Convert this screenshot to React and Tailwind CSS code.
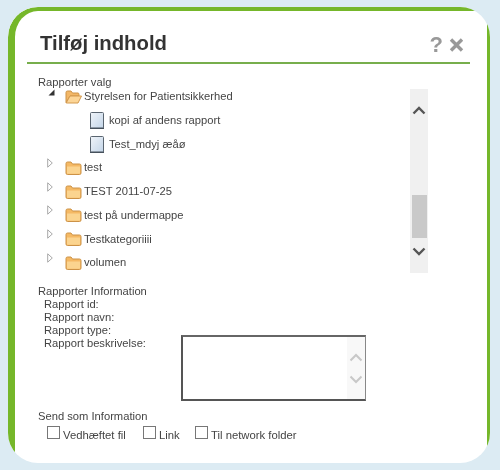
import React from "react";

const FONT = "font-['Liberation_Sans',Arial,sans-serif]";

function ClosedFolder() {
  return (
    <svg width="17" height="14" viewBox="0 0 17 14" className="shrink-0">
      <path d="M1 12V2.500Q1 1 2.500 1H6l1.500 2h7Q16 3 16 4.500V12Q16 13.500 14.500 13.500h-12Q1 13.500 1 12Z" fill="#f5b964" stroke="#cc9247" />
      <path d="M2 5.500h13V12q0 .7-.7.7H2.700Q2 12.700 2 12Z" fill="#fbd48f" />
    </svg>
  );
}

function OpenFolder() {
  return (
    <svg width="17" height="14" viewBox="0 0 17 14" className="shrink-0">
      <path d="M1 12.500V2.500Q1 1 2.500 1H6l1.500 2h5.500Q14 3 14 4.500V6H5L1 12.500Z" fill="#f3b766" stroke="#cc9247" />
      <path d="M1.200 13H13l3.500-7H5Z" fill="#fcd596" stroke="#d49a4f" />
    </svg>
  );
}

function DocIcon() {
  return (
    <svg width="14" height="17" viewBox="0 0 14 17" className="shrink-0">
      <defs>
        <linearGradient id="doc" x1="0" y1="0" x2="1" y2="1">
          <stop offset="0" stopColor="#f0f4f9" />
          <stop offset="1" stopColor="#c3d5e8" />
        </linearGradient>
      </defs>
      <rect x="0.500" y="0.500" width="13" height="16" rx="1" fill="url(#doc)" stroke="#5a6570" />
      <rect x="0" y="15.500" width="14" height="1.500" fill="#46515c" />
    </svg>
  );
}

function Arrow({ open }) {
  return open ? (
    <svg width="7" height="7" viewBox="0 0 7 7" className="shrink-0">
      <path d="M0.500 6.500L6.500 0.500V6.500Z" fill="#333" />
    </svg>
  ) : (
    <svg width="6" height="10" viewBox="0 0 6 10" className="shrink-0">
      <path d="M0.700 0.800L5.300 5L0.700 9.200Z" fill="#fff" stroke="#a8a8a8" />
    </svg>
  );
}

function Chevron({ up, color = "#555", width = 2 }) {
  return (
    <svg width="14" height="9" viewBox="0 0 14 9">
      <path d={up ? "M1.500 7.500L7 2l5.500 5.500" : "M1.500 1.500L7 7l5.500-5.500"} fill="none" stroke={color} strokeWidth={width} />
    </svg>
  );
}

function FolderRow({ label }) {
  return (
    <div className="flex h-[23.700px] items-center">
      <div className="ml-[9px] flex w-[6px] -translate-y-[5px] justify-center">
        <Arrow />
      </div>
      <div className="ml-[12px] flex items-center gap-[2px]">
        <ClosedFolder />
        <span>{label}</span>
      </div>
    </div>
  );
}

function CheckItem({ label, width }) {
  return (
    <div className={`flex items-start gap-[3px] ${width}`}>
      <span className="h-[13px] w-[13px] shrink-0 border border-[#777] bg-white"></span>
      <span className="mt-[3px] text-[11.300px] leading-[13px]">{label}</span>
    </div>
  );
}

export default function App() {
  const folders = ["test", "TEST 2011-07-25", "test på undermappe", "Testkategoriiii", "volumen"];

  return (
    <div className={`${FONT} h-[470px] w-[500px] overflow-hidden bg-[#dcebf3] pl-[8px] pt-[7px] text-[11.200px] text-[#444] blur-[0.3px]`}>
      <div className="relative h-[456px] w-[482px] overflow-hidden rounded-[30px] bg-white pl-[7px] pr-[3px] pt-[4px]">
        {/* green edge: clipped by the card's corners, only top-left follows the curve */}
        <div className="pointer-events-none absolute inset-0 rounded-tl-[30px] border-l-[7px] border-r-[3px] border-t-[4px] border-[#75b72a]"></div>

        <div className="ml-[12px] mr-[17px] mt-[18px] flex h-[35px] items-start justify-between border-b-2 border-[#77ae4c]">
          <h1 className="ml-[13px] mt-[2px] text-[20.300px] font-bold leading-[24px] text-[#333]">Tilføj indhold</h1>
          <div className="mr-[6px] mt-[5px] flex items-center gap-[6px] text-[#999]">
            <span className="text-[22px] font-bold leading-[22px]">?</span>
            <svg width="15" height="14" viewBox="0 0 15 14">
              <path d="M2 1.500L13 12.500M13 1.500L2 12.500" stroke="#999" strokeWidth="3.400" fill="none" />
            </svg>
          </div>
        </div>

        <div className="ml-[23px] mt-[12px] h-[12px] leading-[13px]">Rapporter valg</div>

        <div className="flex">
          <div className="ml-[23px] w-[372px]">
            <div className="flex h-[15px] translate-y-[1px] items-center">
              <div className="ml-[10px] flex w-[7px] -translate-y-[4px] justify-center">
                <Arrow open />
              </div>
              <div className="ml-[10px] flex items-center gap-[2px]">
                <OpenFolder />
                <span>Styrelsen for Patientsikkerhed</span>
              </div>
            </div>
            <div className="ml-[52px] mt-[5px] flex h-[24px] items-center gap-[5px]">
              <DocIcon />
              <span>kopi af andens rapport</span>
            </div>
            <div className="ml-[52px] flex h-[24px] items-center gap-[5px]">
              <DocIcon />
              <span>Test_mdyj æåø</span>
            </div>
            {folders.map((f) => (
              <FolderRow key={f} label={f} />
            ))}
          </div>

          <div className="mt-[1px] flex h-[184px] w-[18px] flex-col items-center bg-[#f0f0f0]">
            <div className="mt-[17px]">
              <Chevron up width={2.400} />
            </div>
            <div className="mt-[80px] h-[43px] w-[15px] bg-[#c9c9c9]"></div>
            <div className="mt-[9px]">
              <Chevron width={2.400} />
            </div>
          </div>
        </div>

        <div className="ml-[23px] mt-[11px] leading-[13px]">Rapporter Information</div>
        <div className="ml-[29px] leading-[13px]">
          <div>Rapport id:</div>
          <div>Rapport navn:</div>
          <div>Rapport type:</div>
          <div className="flex items-start">
            <span className="w-[137px]">Rapport beskrivelse:</span>
            <div className="-mt-[2px] flex h-[66px] w-[185px] justify-end border-2 border-r border-[#555] border-r-[#888] border-t-[#666]">
              <div className="flex w-[18px] flex-col items-center gap-[13px] bg-[#f8f8f8] pt-[16px]">
                <Chevron up color="#c8c8c8" />
                <Chevron color="#c8c8c8" />
              </div>
            </div>
          </div>
        </div>

        <div className="ml-[23px] mt-[9px] leading-[13px]">Send som Information</div>
        <div className="ml-[32px] mt-[3px] flex">
          <CheckItem label="Vedhæftet fil" width="w-[96px]" />
          <CheckItem label="Link" width="w-[52px]" />
          <CheckItem label="Til network folder" />
        </div>
      </div>
    </div>
  );
}
